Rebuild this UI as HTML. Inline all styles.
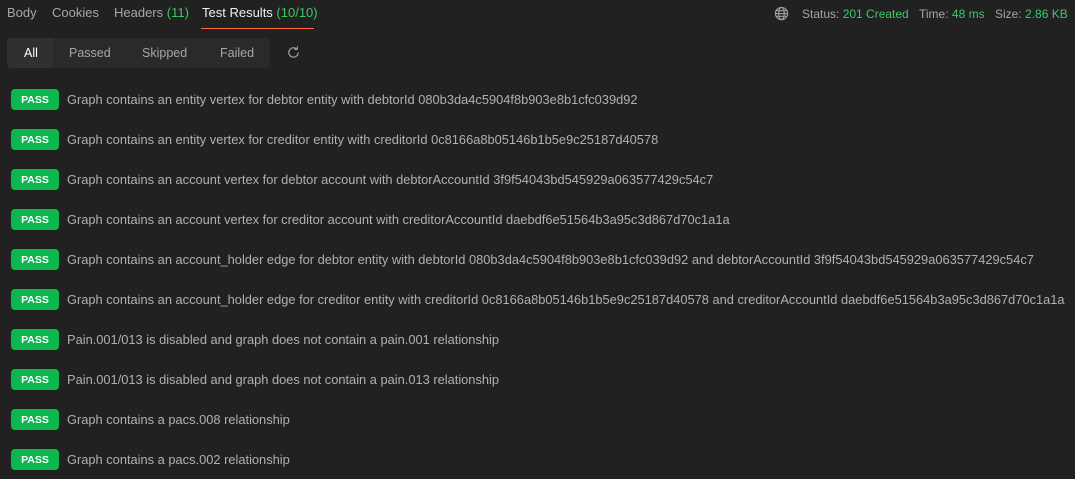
<!DOCTYPE html>
<html><head><style>
body{margin:0;background:#212121;width:1075px;height:479px;overflow:hidden;font-family:"Liberation Sans",sans-serif;color:#a6a6a6;font-size:12.5px;position:relative}
.tab{position:absolute;top:5px;font-size:13px;color:#a6a6a6}
.g{color:#3cc868}
.ul{position:absolute;left:201px;top:28px;width:113px;height:1px;background:#ff6c37}
.seg{position:absolute;left:7px;top:38px;width:263px;height:30px;background:#2a2a2a;border-radius:4px}
.seg span{position:absolute;top:8px;font-size:12.5px}
.sel{position:absolute;left:0;top:0;width:46px;height:30px;background:#303030;border-radius:4px 0 0 4px}
.row{position:absolute;left:11px;height:21px;display:flex;align-items:center}
.b{width:48px;height:21px;background:#0cb84e;border-radius:4px;color:#fff;font-weight:bold;font-size:10.5px;display:flex;align-items:center;justify-content:center}
.t{margin-left:8px;color:#b0b0b0;white-space:nowrap;font-size:12.85px}
.st{position:absolute;top:7px;font-size:12px;color:#a6a6a6}
</style></head><body>
<div class="tab" style="left:7px">Body</div>
<div class="tab" style="left:52px">Cookies</div>
<div class="tab" style="left:114px">Headers <span class="g">(11)</span></div>
<div class="tab" style="left:202px;color:#f0f0f0">Test Results <span class="g">(10/10)</span></div>
<div class="ul"></div>
<svg style="position:absolute;left:774px;top:6px" width="15" height="15" viewBox="0 0 16 16" fill="none" stroke="#a0a0a0" stroke-width="1.2"><circle cx="8" cy="8" r="6.5"/><ellipse cx="8" cy="8" rx="3" ry="6.5"/><path d="M1.5 8h13M2.5 5h11M2.5 11h11"/></svg>
<div class="st" style="left:802px">Status: <span class="g">201 Created</span></div>
<div class="st" style="left:919px">Time: <span class="g">48 ms</span></div>
<div class="st" style="left:995px">Size: <span class="g">2.86 KB</span></div>
<div class="seg"><div class="sel"></div>
<span style="left:17px;color:#fff">All</span><span style="left:62px">Passed</span><span style="left:135px">Skipped</span><span style="left:213px">Failed</span></div>
<svg style="position:absolute;left:286px;top:45px" width="15" height="15" viewBox="0 0 16 16" fill="none" stroke="#a0a0a0" stroke-width="1.3"><path d="M13 8a5 5 0 1 1-1.5-3.6"/><path d="M12 1.5v3.2H8.8"/></svg>
<div class="row" style="top:89px"><div class="b">PASS</div><div class="t">Graph contains an entity vertex for debtor entity with debtorId 080b3da4c5904f8b903e8b1cfc039d92</div></div>
<div class="row" style="top:129px"><div class="b">PASS</div><div class="t">Graph contains an entity vertex for creditor entity with creditorId 0c8166a8b05146b1b5e9c25187d40578</div></div>
<div class="row" style="top:169px"><div class="b">PASS</div><div class="t">Graph contains an account vertex for debtor account with debtorAccountId 3f9f54043bd545929a063577429c54c7</div></div>
<div class="row" style="top:209px"><div class="b">PASS</div><div class="t">Graph contains an account vertex for creditor account with creditorAccountId daebdf6e51564b3a95c3d867d70c1a1a</div></div>
<div class="row" style="top:249px"><div class="b">PASS</div><div class="t">Graph contains an account_holder edge for debtor entity with debtorId 080b3da4c5904f8b903e8b1cfc039d92 and debtorAccountId 3f9f54043bd545929a063577429c54c7</div></div>
<div class="row" style="top:289px"><div class="b">PASS</div><div class="t">Graph contains an account_holder edge for creditor entity with creditorId 0c8166a8b05146b1b5e9c25187d40578 and creditorAccountId daebdf6e51564b3a95c3d867d70c1a1a</div></div>
<div class="row" style="top:329px"><div class="b">PASS</div><div class="t">Pain.001/013 is disabled and graph does not contain a pain.001 relationship</div></div>
<div class="row" style="top:369px"><div class="b">PASS</div><div class="t">Pain.001/013 is disabled and graph does not contain a pain.013 relationship</div></div>
<div class="row" style="top:409px"><div class="b">PASS</div><div class="t">Graph contains a pacs.008 relationship</div></div>
<div class="row" style="top:449px"><div class="b">PASS</div><div class="t">Graph contains a pacs.002 relationship</div></div>
</body></html>
